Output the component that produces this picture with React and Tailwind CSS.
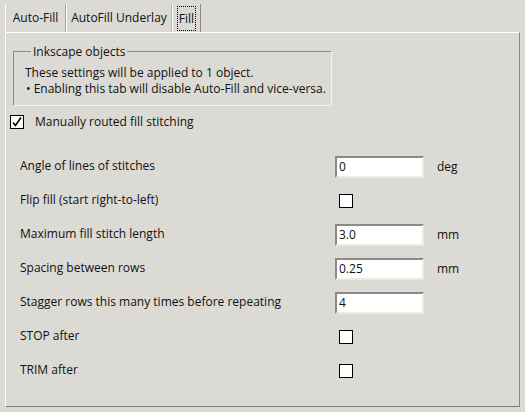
import React from 'react';

const rows = [
  { label: 'Angle of lines of stitches', kind: 'text', value: '0', unit: 'deg' },
  { label: 'Flip fill (start right-to-left)', kind: 'check' },
  { label: 'Maximum fill stitch length', kind: 'text', value: '3.0', unit: 'mm' },
  { label: 'Spacing between rows', kind: 'text', value: '0.25', unit: 'mm' },
  { label: 'Stagger rows this many times before repeating', kind: 'text', value: '4' },
  { label: 'STOP after', kind: 'check' },
  { label: 'TRIM after', kind: 'check' },
];

function Box({ checked }) {
  return (
    <div className="w-[14px] h-[14px] border border-black bg-white flex items-center justify-center">
      {checked && (
        <svg width="12" height="12" viewBox="0 0 12 12">
          <path d="M2 6.5 L4.5 9.5 L10 1.5" fill="none" stroke="#000" strokeWidth="1.6" />
        </svg>
      )}
    </div>
  );
}

export default function App() {
  return (
    <div
      className="w-[525px] h-[412px] bg-[#dcdad5] pt-[4px] pl-[5px] text-[12px] text-[#111]"
      style={{ fontFamily: '"Open Sans", "Noto Sans", sans-serif' }}
    >
      {/* tabs */}
      <div className="flex h-[28px]">
        <div className="h-full w-[61px] border-l border-white border-r border-r-[#a9a7a2] flex items-center justify-center">
          Auto-Fill
        </div>
        <div className="h-full w-[106px] border-l border-white border-r border-r-[#b5b3ae] flex items-center justify-center">
          AutoFill Underlay
        </div>
        <div className="h-full w-[29px] border-l border-white border-r border-r-[#8f8d88] flex items-center justify-center">
          <span className="outline outline-1 outline-dotted outline-black px-[1px] py-[4px] leading-[15px]">Fill</span>
        </div>
      </div>

      {/* panel */}
      <div className="w-[515px] h-[375px] border border-t-white border-l-white border-r-[#8a8884] border-b-[#7d7b76]">
        <fieldset className="ml-[7px] mt-[11px] w-[319px] h-[62px] border border-t-[#8c8a85] border-l-[#8c8a85] border-r-[#f4f3f0] border-b-[#f4f3f0] pl-[11px]">
          <legend className="ml-[6px] px-[2px] leading-[15px]">Inkscape objects</legend>
          <div className="mt-[6px] leading-[16px]">These settings will be applied to 1 object.</div>
          <div className="leading-[16px] pl-[1px]">• Enabling this tab will disable Auto-Fill and vice-versa.</div>
        </fieldset>

        <div className="flex items-center gap-[11px] ml-[4px] mt-[8px] h-[16px]">
          <Box checked />
          <span>Manually routed fill stitching</span>
        </div>

        <div className="mt-[26px] pl-[14px] flex flex-col gap-[12px]">
          {rows.map((r) => (
            <div key={r.label} className="flex items-center h-[22px]">
              <div className="w-[315px] -mt-[2px]">{r.label}</div>
              {r.kind === 'text' ? (
                <>
                  <div className="w-[89px] h-[22px] bg-white border-2 border-t-[#8d8a83] border-l-[#8d8a83] border-r-[#ebeae6] border-b-[#ebeae6] pl-[2px] flex items-center">
                    {r.value}
                  </div>
                  {r.unit && <div className="ml-[13px]">{r.unit}</div>}
                </>
              ) : (
                <div className="ml-[4px]">
                  <Box />
                </div>
              )}
            </div>
          ))}
        </div>
      </div>
    </div>
  );
}
